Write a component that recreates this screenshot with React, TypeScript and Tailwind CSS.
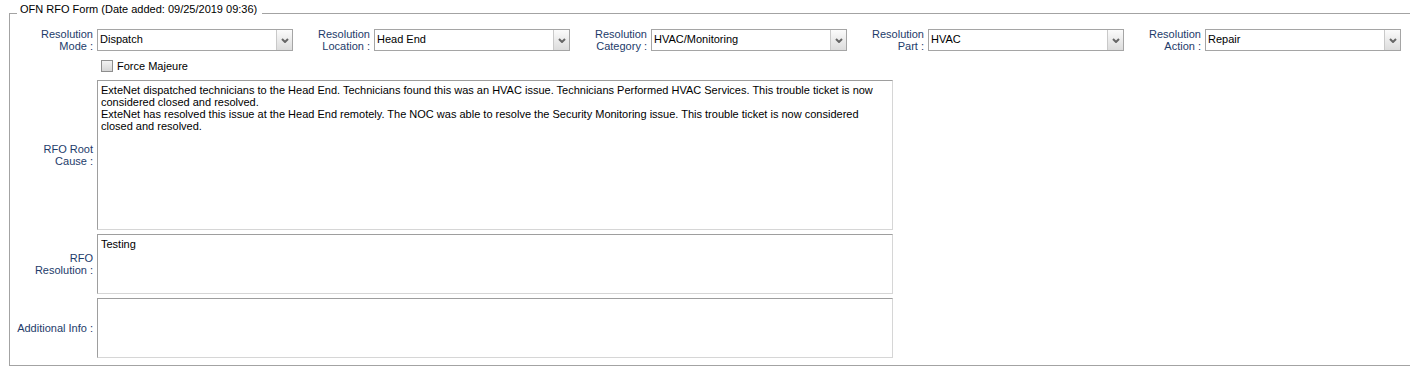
const selects = [
  { top: "Resolution", bottom: "Mode :", value: "Dispatch" },
  { top: "Resolution", bottom: "Location :", value: "Head End" },
  { top: "Resolution", bottom: "Category :", value: "HVAC/Monitoring" },
  { top: "Resolution", bottom: "Part :", value: "HVAC" },
  { top: "Resolution", bottom: "Action :", value: "Repair" },
] as const

const rootCause = [
  "ExteNet dispatched technicians to the Head End. Technicians found this was an HVAC issue. Technicians Performed HVAC Services. This trouble ticket is now considered closed and resolved.",
  "ExteNet has resolved this issue at the Head End remotely. The NOC was able to resolve the Security Monitoring issue. This trouble ticket is now considered closed and resolved.",
]

function FakeSelect({ value }: { value: string }) {
  return (
    <div className="flex h-[22px] w-[196px] border border-[#a5a5a5] bg-white">
      <span className="flex-1 truncate pl-[2px] pt-[1px] leading-[16px] text-black">
        {value}
      </span>
      <div className="flex w-[16px] items-center justify-center border-l border-[#c9c9c9] bg-linear-to-b from-[#fbfbfb] to-[#dcdcdc]">
        <svg width="8" height="5" viewBox="0 0 8 5" fill="none">
          <path d="M1 1 L4 4 L7 1" stroke="#666666" strokeWidth="2" />
        </svg>
      </div>
    </div>
  )
}

function TextBox({
  label,
  height,
  children,
}: {
  label: React.ReactNode
  height: string
  children?: React.ReactNode
}) {
  return (
    <div className="flex items-center">
      <div className="w-[80px] pr-[4px] text-right leading-[12px] text-[#1d3b6a]">
        {label}
      </div>
      <div
        className={`w-[796px] ${height} border border-t-[#9e9e9e] border-l-[#9e9e9e] border-b-[#d6d6d6] border-r-[#d6d6d6] bg-white px-[3px] pt-[3px] leading-[12px] text-black`}
      >
        {children}
      </div>
    </div>
  )
}

export default function App() {
  return (
    <div
      className="h-[377px] w-[1410px] overflow-hidden bg-white text-[11px]"
      style={{ fontFamily: '"Liberation Sans", Arial, sans-serif' }}
    >
      <fieldset className="ml-[9px] border border-r-0 border-[#a3a3a3] pb-[7px] pl-[7px]">
        <legend className="pb-[10px] pl-[3px] pr-[5px] pt-[3px] leading-[13px] text-black">
          OFN RFO Form (Date added: 09/25/2019 09:36)
        </legend>

        <div className="mt-[2px] flex">
          {selects.map((s) => (
            <div key={s.bottom} className="flex w-[277px] items-center">
              <div className="w-[80px] pr-[4px] text-right leading-[12px] text-[#1d3b6a]">
                {s.top}
                <br />
                {s.bottom}
              </div>
              <FakeSelect value={s.value} />
            </div>
          ))}
        </div>

        <div className="ml-[84px] mt-[8px] flex h-[12px] items-center gap-[4px]">
          <div className="h-[12px] w-[12px] border border-[#8e8e8e] bg-linear-to-b from-[#f2f2f2] to-[#d6d6d6]" />
          <span className="leading-[12px] text-black">Force Majeure</span>
        </div>

        <div className="mt-[8px] flex flex-col gap-[4px]">
          <TextBox
            height="h-[150px]"
            label={
              <>
                RFO Root
                <br />
                Cause :
              </>
            }
          >
            {rootCause.map((p) => (
              <div key={p}>{p}</div>
            ))}
          </TextBox>
          <TextBox
            height="h-[60px]"
            label={
              <>
                RFO
                <br />
                Resolution :
              </>
            }
          >
            Testing
          </TextBox>
          <TextBox height="h-[60px]" label="Additional Info :" />
        </div>
      </fieldset>
    </div>
  )
}
